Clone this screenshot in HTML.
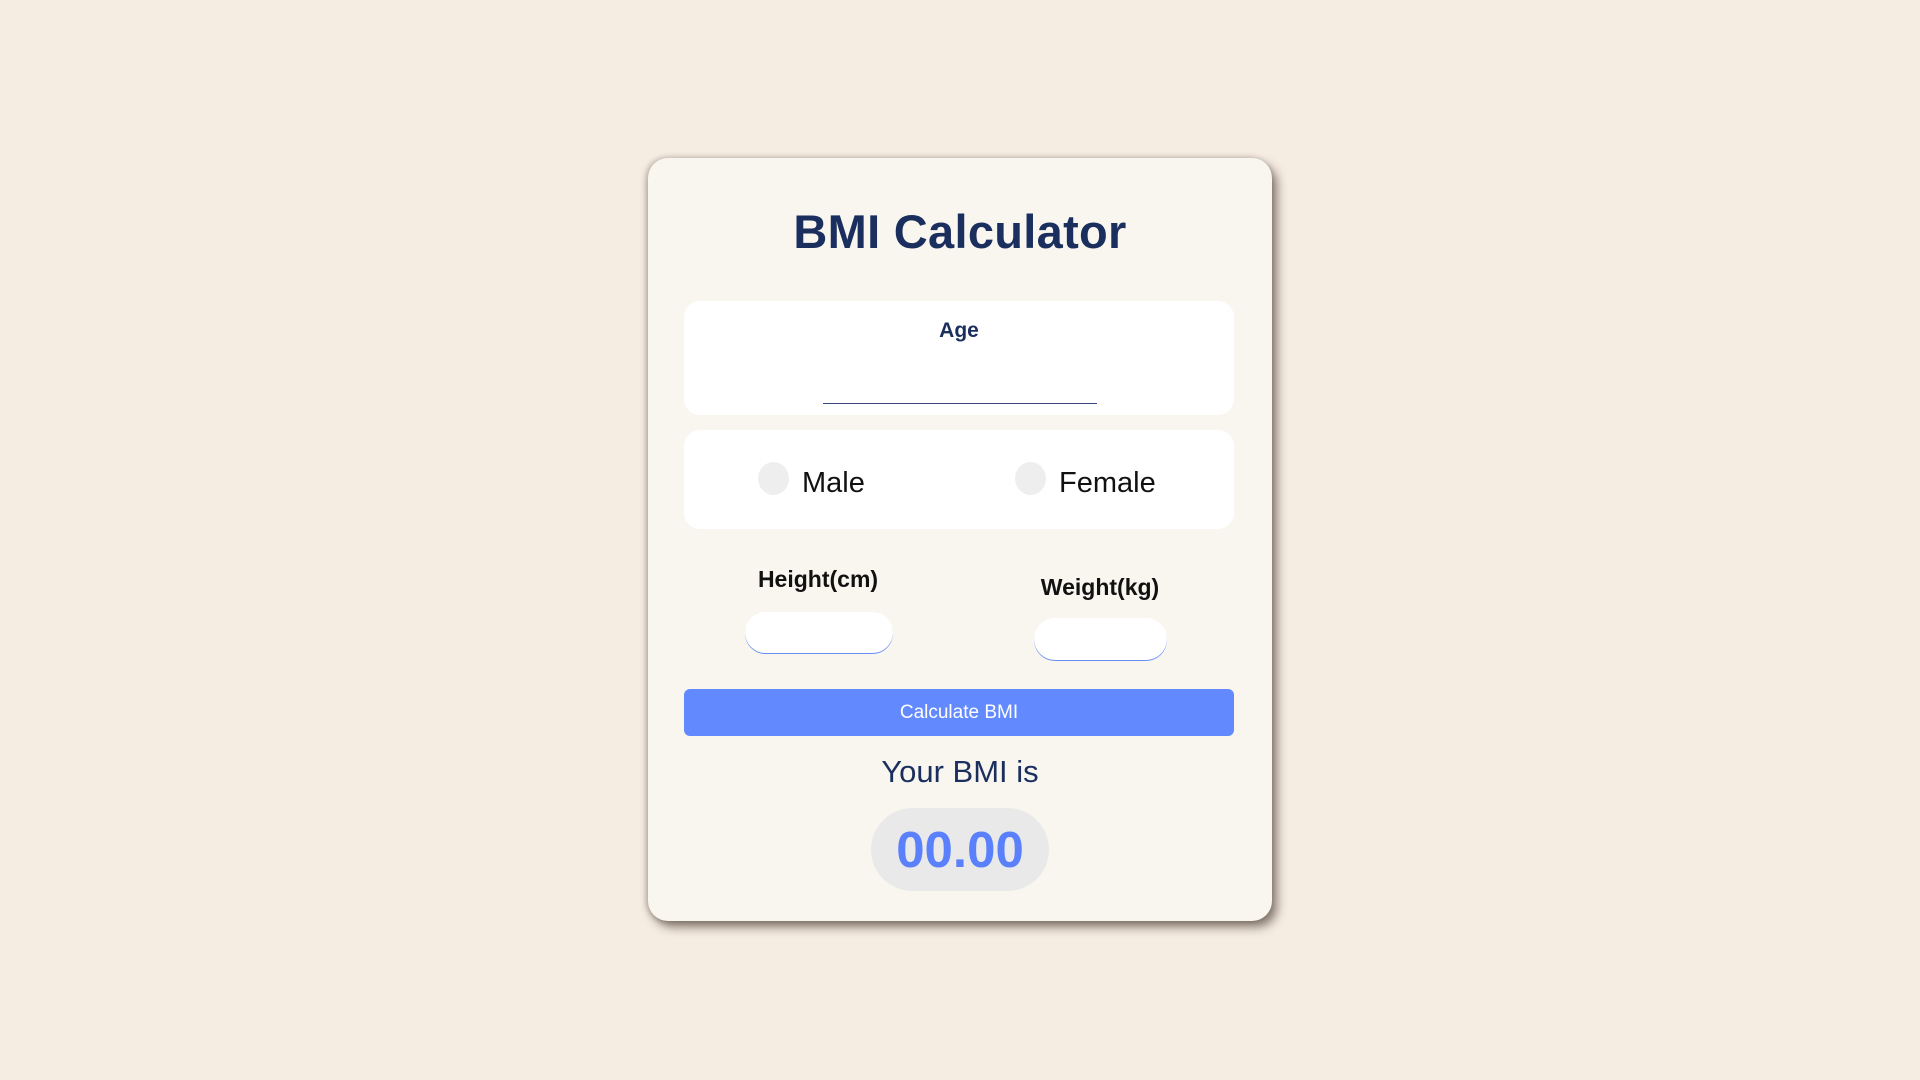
<!DOCTYPE html>
<html><head><style>
*{margin:0;padding:0;box-sizing:border-box}
body{width:1920px;height:1080px;background:#f5ece2;font-family:"Liberation Sans",sans-serif;position:relative;overflow:hidden}
.card{position:absolute;left:648px;top:158px;width:624px;height:763px;background:#f9f6f0;border-radius:20px;box-shadow:5px 6px 10px rgba(60,45,35,0.6),-2px 0 6px rgba(60,45,35,0.3)}
.abs{position:absolute}
.box{position:absolute;left:36px;width:550px;background:#fff;border-radius:16px}
.radio{position:absolute;width:31px;height:33px;border-radius:50%;background:#eeeeee}
.t{position:absolute;font-size:29px;color:#111}
.lbl{position:absolute;font-size:23px;font-weight:bold;color:#111;text-align:center}
.inp{position:absolute;background:#fff;border-radius:22px;box-shadow:0 1px 0 #6a8cf5}
</style></head><body>
<div class="card">
  <div class="abs" style="left:0;top:46px;width:624px;text-align:center;font-size:47px;font-weight:bold;color:#1b2f5e;letter-spacing:0.3px">BMI Calculator</div>
  <div class="box" style="top:143px;height:114px">
    <div class="abs" style="left:0;width:550px;top:18px;text-align:center;font-size:21px;font-weight:bold;color:#1b2f5e">Age</div>
    <div class="abs" style="left:139px;top:102px;width:274px;height:1px;background:#3a4580"></div>
  </div>
  <div class="box" style="top:272px;height:99px">
    <div class="radio" style="left:74px;top:32px"></div>
    <div class="t" style="left:118px;top:37px">Male</div>
    <div class="radio" style="left:331px;top:32px"></div>
    <div class="t" style="left:375px;top:37px">Female</div>
  </div>
  <div class="lbl" style="left:70px;width:200px;top:408px">Height(cm)</div>
  <div class="lbl" style="left:352px;width:200px;top:416px">Weight(kg)</div>
  <div class="inp" style="left:97px;top:454px;width:148px;height:41px"></div>
  <div class="inp" style="left:386px;top:460px;width:133px;height:42px"></div>
  <div class="abs" style="left:36px;top:531px;width:550px;height:47px;background:#6289fd;border-radius:6px;color:#fff;font-size:19px;text-align:center;line-height:47px">Calculate BMI</div>
  <div class="abs" style="left:0;width:624px;top:596px;text-align:center;font-size:31px;color:#1b2f5e">Your BMI is</div>
  <div class="abs" style="left:223px;top:650px;width:178px;height:83px;border-radius:42px;background:#e9e9e9;color:#5a80fb;font-size:51px;font-weight:bold;text-align:center;line-height:83px">00.00</div>
</div>
</body></html>
